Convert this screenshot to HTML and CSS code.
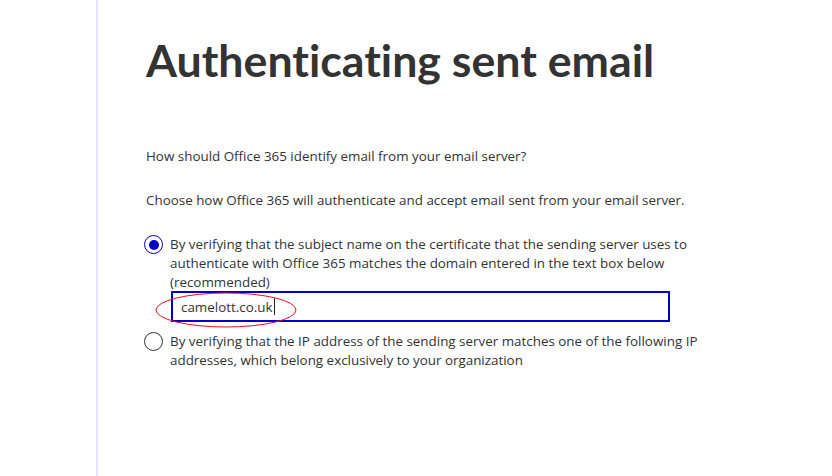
FILE: index.html
```html
<!DOCTYPE html>
<html>
<head>
<meta charset="utf-8">
<link rel="stylesheet" href="styles.css">
</head>
<body>
<div class="page">
  <div class="rail"></div>
  <main class="content">
    <h1 class="title">Authenticating sent email</h1>
    <p class="q">How should Office 365 identify email from your email server?</p>
    <p class="q2">Choose how Office 365 will authenticate and accept email sent from your email server.</p>
    <div class="option">
      <span class="radio checked"></span>
      <span class="label">By verifying that the subject name on the certificate that the sending server uses to authenticate with Office 365 matches the domain entered in the text box below (recommended)</span>
    </div>
    <div class="field">
      <div class="box"><span class="val">camelott.co.uk</span><span class="caret"></span></div>
      <svg class="ring" width="144" height="38" viewBox="0 0 144 38"><ellipse cx="72" cy="19" rx="70" ry="17" fill="none" stroke="#e8101c" stroke-width="1"/></svg>
    </div>
    <div class="option second">
      <span class="radio"></span>
      <span class="label">By verifying that the IP address of the sending server matches one of the following IP addresses, which belong exclusively to your organization</span>
    </div>
  </main>
</div>
</body>
</html>
```
FILE: styles.css
```css
html, body {
  margin: 0;
  padding: 0;
  background: #fff;
}
body {
  font-family: "Open Sans", "Noto Sans", sans-serif;
  color: #333;
}
.page {
  display: flex;
  height: 476px;
}
.rail {
  width: 96px;
  border-right: 2px solid #e6e6fb;
  flex: none;
}
.content {
  padding-left: 48px;
  width: 600px;
}
.title {
  margin: 28px 0 0 0;
  font-family: "Lato", "Open Sans", sans-serif;
  font-size: 44.7px;
  font-weight: 700;
  line-height: 64px;
  white-space: nowrap;
  font-variant-ligatures: none;
  color: #333;
}
.q {
  margin: 55px 0 0 0;
  font-size: 13.4px;
  line-height: 19px;
}
.q2 {
  margin: 25px 0 0 0;
  font-size: 13.4px;
  line-height: 19px;
}
.option {
  display: flex;
  align-items: flex-start;
  margin-top: 25px;
  font-size: 13.4px;
  line-height: 19px;
}
.option.second {
  margin-top: 10px;
}
.radio {
  flex: none;
  width: 17px;
  height: 17px;
  border: 1.5px solid #333;
  border-radius: 50%;
  margin: 0 7px 0 -2px;
  display: flex;
  align-items: center;
  justify-content: center;
}
.radio.checked {
  border-color: #0000c8;
}
.radio.checked::after {
  content: "";
  width: 10px;
  height: 10px;
  border-radius: 50%;
  background: #0000c8;
}
.label {
  width: 532px;
}
.field {
  position: relative;
  margin-left: 25px;
  margin-top: -1px;
}
.box {
  width: 487px;
  height: 27px;
  border: 2px solid #0000c8;
  display: flex;
  align-items: center;
  padding-left: 8px;
  font-size: 13.4px;
}
.caret {
  display: inline-block;
  width: 1px;
  height: 17px;
  background: #222;
  margin-left: 1px;
}
.ring {
  position: absolute;
  left: -17px;
  top: 0px;
  pointer-events: none;
}
```
